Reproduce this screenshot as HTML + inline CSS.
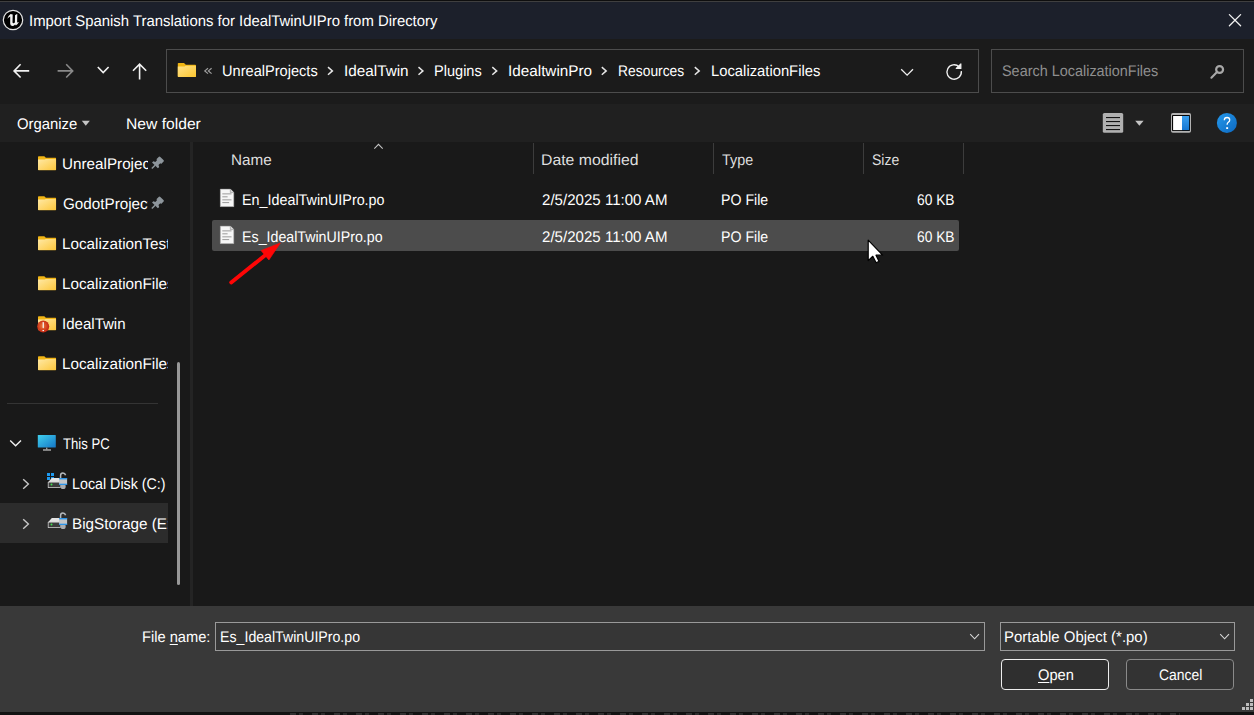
<!DOCTYPE html>
<html><head><meta charset="utf-8">
<style>
html,body{margin:0;padding:0;}
body{width:1254px;height:715px;position:relative;overflow:hidden;background:#0e0e0e;font-family:"Liberation Sans", sans-serif;}
.a{position:absolute;}
.t{position:absolute;white-space:nowrap;font-family:"Liberation Sans", sans-serif;text-rendering:geometricPrecision;}
.t u{text-decoration:underline;text-underline-offset:2px;text-decoration-thickness:1px;}
svg{position:absolute;overflow:visible;}
</style></head><body>
<!-- window frame -->
<div class="a" style="left:0;top:1px;width:1254px;height:1px;background:#3f3f3f"></div>
<!-- title bar -->
<div class="a" style="left:0;top:2px;width:1254px;height:37px;background:#1c202b"></div>
<!-- nav bar -->
<div class="a" style="left:0;top:39px;width:1254px;height:65px;background:#1b1b1b"></div>
<!-- command bar -->
<div class="a" style="left:0;top:104px;width:1254px;height:38px;background:#202020"></div>
<!-- main -->
<div class="a" style="left:0;top:142px;width:1254px;height:464px;background:#191919"></div>
<!-- bottom panel -->
<div class="a" style="left:0;top:606px;width:1254px;height:106px;background:#393939"></div>

<!-- UE logo -->
<svg style="left:0;top:0" width="30" height="40" viewBox="0 0 30 40">
  <circle cx="13" cy="20" r="9.7" fill="#000" stroke="#e4e4e4" stroke-width="1.2"/>
  <path d="M7.3 18.7 Q8.2 15.6 10.6 14.1 L12.7 14.6 L12.5 22.2 Q12.7 23.4 13.7 23.2 L14.9 22.6 L15 15.3 L17 14 L17.3 14.3 L17.1 22.4 L18.9 22.1 Q17.8 24.4 15.9 25.6 L15.1 24.5 Q13.8 26.2 12.1 26.1 Q10.3 25.7 10.2 23.8 L10.2 16.4 Q8.6 17 7.3 18.7 Z" fill="#f2f2f2"/>
</svg>
<!-- close X -->
<svg style="left:0;top:0" width="1254" height="40" viewBox="0 0 1254 40">
  <path d="M1229.4 14.6 L1240.6 25.8 M1240.6 14.6 L1229.4 25.8" stroke="#f2f2f2" stroke-width="1.3" stroke-linecap="round"/>
</svg>

<!-- nav buttons -->
<svg style="left:13px;top:63px" width="17" height="16" viewBox="0 0 17 16">
  <path d="M16.2 7.9 H1.2 M7.6 1.3 L1.1 7.9 L7.6 14.5" stroke="#f2f2f2" stroke-width="1.6" fill="none"/>
</svg>
<svg style="left:57px;top:63px" width="17" height="16" viewBox="0 0 17 16">
  <path d="M0.6 7.9 H15.6 M9.2 1.3 L15.7 7.9 L9.2 14.5" stroke="#8a8a8a" stroke-width="1.6" fill="none"/>
</svg>
<svg style="left:97px;top:66px" width="13" height="8" viewBox="0 0 13 8">
  <path d="M0.8 1 L6.2 6.6 L11.6 1" stroke="#f2f2f2" stroke-width="1.6" fill="none"/>
</svg>
<svg style="left:132px;top:63px" width="16" height="17" viewBox="0 0 16 17">
  <path d="M7.6 16.5 V1.3 M1 7.8 L7.6 1.2 L14.2 7.8" stroke="#f2f2f2" stroke-width="1.6" fill="none"/>
</svg>

<!-- search box -->
<div class="a" style="left:991px;top:49px;width:251px;height:42px;border:1px solid #4c4c4c;background:#1b1b1b"></div>
<!-- address box -->
<div class="a" style="left:166px;top:49px;width:811px;height:42px;border:1px solid #4c4c4c;background:#1b1b1b"></div>
<!-- folder in address -->
<svg style="left:177px;top:62px" width="20" height="16" viewBox="0 0 20 16">
  <defs><linearGradient id="fg" x1="0" y1="0" x2="1" y2="1"><stop offset="0" stop-color="#ffe28a"/><stop offset="1" stop-color="#fbc52e"/></linearGradient></defs>
  <path d="M0.8 1.5 Q0.8 0.9 1.5 0.9 H7 L8.8 2.8 H18.2 Q19 2.8 19 3.6 V14.2 Q19 15 18.2 15 H1.6 Q0.8 15 0.8 14.2 Z" fill="#f0b512"/>
  <path d="M0.8 4.6 H7.5 L8.8 3.8 H18.2 Q19 3.8 19 4.6 V14.2 Q19 15 18.2 15 H1.6 Q0.8 15 0.8 14.2 Z" fill="url(#fg)"/>
</svg>
<svg style="left:0;top:0" width="220" height="90" viewBox="0 0 220 90"><path d="M208 68.2 L204.8 70.9 L208 73.6 M211.6 68.2 L208.4 70.9 L211.6 73.6" stroke="#a0a0a0" stroke-width="1.2" fill="none"/></svg>
<!-- breadcrumb chevrons -->
<svg style="left:0;top:0" width="1254" height="100" viewBox="0 0 1254 100">
  <g stroke="#e6e6e6" stroke-width="1.5" fill="none">
    <path d="M328 67.1 L332.4 70.9 L328 74.7"/>
    <path d="M492.3 67.1 L496.7 70.9 L492.3 74.7"/>
    <path d="M601.8 67.1 L606.2 70.9 L601.8 74.7"/>
    <path d="M694.8 67.1 L699.2 70.9 L694.8 74.7"/>
  </g>
  <g stroke="#e6e6e6" stroke-width="1.5" fill="none">
    <path d="M432 67.1 L436.4 70.9 L432 74.7" transform="translate(-13.5 0)" opacity="1"/>
  </g>
  <!-- dropdown chevron -->
  <path d="M901.2 69.2 L907.1 75.1 L913 69.2" stroke="#f0f0f0" stroke-width="1.3" fill="none"/>
  <!-- refresh -->
  <path d="M961.3 71.2 A7.2 7.2 0 1 1 959.2 66.9" stroke="#f0f0f0" stroke-width="1.4" fill="none"/>
  <path d="M956.2 68.4 H960.9 V63.8 Z" stroke="#f0f0f0" stroke-width="1.1" fill="#f0f0f0" stroke-linejoin="round"/>
</svg>

<svg style="left:0;top:0" width="1254" height="100" viewBox="0 0 1254 100">
  <circle cx="1219.6" cy="69.5" r="3.45" stroke="#a8a8a8" stroke-width="2.2" fill="none"/>
  <path d="M1217 72.1 L1211.4 77.7" stroke="#a8a8a8" stroke-width="2.1" stroke-linecap="round"/>
</svg>
<!-- command bar icons -->
<svg style="left:0;top:0" width="1254" height="145" viewBox="0 0 1254 145">
  <path d="M81.8 120.8 H89.8 L85.8 125.8 Z" fill="#c4c4c4"/>
  <rect x="1102.8" y="113" width="20.4" height="19.8" rx="1.6" fill="#b0b0b0"/>
  <g fill="#141414">
    <rect x="1106" y="117" width="14" height="1.1"/><rect x="1106" y="121" width="14" height="1.1"/><rect x="1106" y="125" width="14" height="1.1"/><rect x="1106" y="129" width="14" height="1.1"/>
  </g>
  <path d="M1135.2 120.8 H1143.6 L1139.4 125.8 Z" fill="#c4c4c4"/>
  <rect x="1171" y="113" width="20" height="19.8" rx="1.8" fill="#b2b2b2"/>
  <rect x="1172" y="115" width="18" height="16" rx="0.8" fill="#050505"/>
  <rect x="1173.1" y="116" width="8.9" height="14.1" fill="#ffffff"/>
  <defs><linearGradient id="bl" x1="0" y1="0" x2="0" y2="1"><stop offset="0" stop-color="#3aa0f0"/><stop offset="1" stop-color="#1677d2"/></linearGradient>
  <linearGradient id="hl" x1="0" y1="0" x2="1" y2="1"><stop offset="0" stop-color="#2499ec"/><stop offset="1" stop-color="#0d68c0"/></linearGradient></defs>
  <rect x="1182" y="116" width="7.2" height="14.1" fill="url(#bl)"/>
  <circle cx="1226.9" cy="122.9" r="10" fill="url(#hl)"/>
  <path d="M1224.3 120.2 Q1224.3 117.5 1227.1 117.5 Q1229.7 117.5 1229.7 119.9 Q1229.7 121.4 1228.3 122.3 Q1227.1 123.1 1227.1 124.8" stroke="#fff" stroke-width="1.3" fill="none"/>
  <rect x="1226.2" y="127.2" width="1.9" height="1.8" fill="#fff"/>
</svg>

<!-- nav pane -->
<div class="a" style="left:190px;top:142px;width:3px;height:464px;background:#242424"></div>
<div class="a" style="left:177px;top:362px;width:3px;height:223px;background:#989898;border-radius:1.5px"></div>
<div class="a" style="left:7px;top:403px;width:151px;height:1px;background:#343434"></div>
<div class="a" style="left:0;top:503px;width:168px;height:40px;background:#2c2c2c"></div>
<svg style="left:0;top:0" width="200" height="600" viewBox="0 0 200 600">
  <defs>
    <linearGradient id="fb" x1="0" y1="0" x2="1" y2="1"><stop offset="0" stop-color="#ffe9a6"/><stop offset="1" stop-color="#fcc63a"/></linearGradient>
    <symbol id="folder" viewBox="0 0 19 15">
      <path d="M0 1.2 Q0 0.3 0.8 0.3 H6.6 L8.2 2 H18.2 Q19 2 19 2.8 V14.1 Q19 14.9 18.2 14.9 H0.8 Q0 14.9 0 14.1 Z" fill="#f1b515"/>
      <path d="M0 3.8 H6.8 L8.2 3.1 H18.2 Q19 3.1 19 3.9 V14.1 Q19 14.9 18.2 14.9 H0.8 Q0 14.9 0 14.1 Z" fill="url(#fb)"/>
    </symbol>
    
    <symbol id="disk" viewBox="0 0 21 18">
      <path d="M1.3 10 L4.8 6 H13.4 V10 Z" fill="#e4e4e4"/>
      <rect x="0.8" y="9.8" width="12.8" height="6.2" rx="0.6" fill="#c9c9c9"/>
      <rect x="1.6" y="10.6" width="11.4" height="4.6" fill="#3c3c3c"/>
      <circle cx="4.5" cy="12.4" r="1" fill="#3ee04e"/>
      <path d="M13.6 6.2 V3.6 Q13.6 1.1 15.9 1.1 Q18 1.1 18.6 3.2" stroke="#b4b8bc" stroke-width="1.5" fill="none"/>
      <circle cx="16.1" cy="14.4" r="2.6" fill="#a9adb1"/>
      <rect x="12.1" y="6" width="8" height="7" fill="#c4c6c8"/>
      <rect x="12.1" y="6" width="8" height="1.4" fill="#2b95ea"/>
      <rect x="12.1" y="11.7" width="8" height="1.3" fill="#2b95ea"/>
    </symbol>
  </defs>
  <use href="#folder" x="38" y="155.8" width="18.2" height="14.6"/>
  <use href="#folder" x="38" y="195.8" width="18.2" height="14.6"/>
  <use href="#folder" x="38" y="235.8" width="18.2" height="14.6"/>
  <use href="#folder" x="38" y="275.8" width="18.2" height="14.6"/>
  <use href="#folder" x="38" y="315.8" width="18.2" height="14.6"/>
  <use href="#folder" x="38" y="355.8" width="18.2" height="14.6"/>
  <g transform="translate(151.8 168.6) rotate(-45) scale(0.86)" fill="#8d959b"><rect x="0" y="-0.85" width="5.5" height="1.7"/><path d="M5.2 -4.8 L7.4 -4.8 L8.4 -2.6 L11.4 -2.6 L11.4 -3.6 Q11.4 -3.9 11.8 -3.9 L15.6 -3.9 Q16.6 -3.9 16.6 -2.6 L16.6 2.6 Q16.6 3.9 15.6 3.9 L11.8 3.9 Q11.4 3.9 11.4 3.6 L11.4 2.6 L8.4 2.6 L7.4 4.8 L5.2 4.8 Z"/></g>
  <g transform="translate(151.8 208.6) rotate(-45) scale(0.86)" fill="#8d959b"><rect x="0" y="-0.85" width="5.5" height="1.7"/><path d="M5.2 -4.8 L7.4 -4.8 L8.4 -2.6 L11.4 -2.6 L11.4 -3.6 Q11.4 -3.9 11.8 -3.9 L15.6 -3.9 Q16.6 -3.9 16.6 -2.6 L16.6 2.6 Q16.6 3.9 15.6 3.9 L11.8 3.9 Q11.4 3.9 11.4 3.6 L11.4 2.6 L8.4 2.6 L7.4 4.8 L5.2 4.8 Z"/></g>
  <!-- error badge -->
  <defs><radialGradient id="eb" cx="0.45" cy="0.45" r="0.6"><stop offset="0" stop-color="#ec7a36"/><stop offset="1" stop-color="#c01c10"/></radialGradient></defs>
  <circle cx="43.2" cy="326.6" r="6" fill="url(#eb)"/>
  <rect x="42.6" y="322" width="1.3" height="6.2" rx="0.6" fill="#f4f4f4"/>
  <rect x="42.5" y="330" width="1.5" height="1.1" fill="#f4f4f4"/>
  <!-- This PC -->
  <path d="M10.2 440.4 L15.6 445.8 L21 440.4" stroke="#f0f0f0" stroke-width="1.4" fill="none"/>
  <defs><linearGradient id="pc" x1="0" y1="0" x2="1" y2="1"><stop offset="0" stop-color="#40d0ee"/><stop offset="1" stop-color="#1476c6"/></linearGradient></defs>
  <rect x="37.8" y="435" width="18" height="12.6" rx="0.6" fill="url(#pc)"/>
  <rect x="46" y="447.6" width="1.4" height="1.8" fill="#9a9a9a"/>
  <rect x="43" y="449.4" width="8" height="1.2" fill="#c8c8c8"/>
  <!-- Local disk -->
  <path d="M23.2 479.2 L28.4 484 L23.2 488.8" stroke="#c8c8c8" stroke-width="1.4" fill="none"/>
  <g fill="#1e9af0"><rect x="47" y="473" width="3" height="3"/><rect x="51" y="473" width="3" height="3"/><rect x="47" y="477" width="3" height="3"/><rect x="51" y="477" width="3" height="3"/></g>
  <use href="#disk" x="47" y="472" width="21" height="18"/>
  <!-- BigStorage -->
  <path d="M23.2 519.2 L28.4 524 L23.2 528.8" stroke="#c8c8c8" stroke-width="1.4" fill="none"/>
  <use href="#disk" x="47" y="512" width="21" height="18"/>
</svg>

<!-- column header separators -->
<div class="a" style="left:533px;top:143px;width:1px;height:31px;background:#3c3c3c"></div>
<div class="a" style="left:713px;top:143px;width:1px;height:31px;background:#3c3c3c"></div>
<div class="a" style="left:863px;top:143px;width:1px;height:31px;background:#3c3c3c"></div>
<div class="a" style="left:963px;top:143px;width:1px;height:31px;background:#3c3c3c"></div>
<svg style="left:373px;top:143px" width="11" height="7" viewBox="0 0 11 7">
  <path d="M1.3 5.6 L5.5 1.3 L9.7 5.6" stroke="#c4c4c4" stroke-width="1.05" fill="none"/>
</svg>
<!-- selected row -->
<div class="a" style="left:212px;top:220px;width:747px;height:31px;background:#4c4c4c;border-radius:2px"></div>
<!-- file icons -->
<svg style="left:0;top:0" width="1254" height="300" viewBox="0 0 1254 300">
  <defs>
    <symbol id="file" viewBox="0 0 15 19">
      <path d="M0.5 0.5 H10.8 L14.4 4.1 V18.5 H0.5 Z" fill="#f6f6f6" stroke="#a0a0a0" stroke-width="0.8"/>
      <path d="M10.8 0.5 V4.1 H14.4" fill="#d8d8d8" stroke="#a0a0a0" stroke-width="0.8"/>
      <g stroke="#8e8e8e" stroke-width="0.9"><path d="M2.6 5.4 H12"/><path d="M2.6 8.4 H8"/><path d="M2.6 11.5 H12"/><path d="M2.6 14.3 H9.6"/></g>
    </symbol>
  </defs>
  <use href="#file" x="219.6" y="188.6" width="15" height="18.6"/>
  <use href="#file" x="219.6" y="225.6" width="15" height="18.6"/>
  <!-- red arrow -->
  <path d="M231.2 282.4 L265.5 255" stroke="#fe0606" stroke-width="3.9" stroke-linecap="round"/>
  <path d="M280.4 242.9 L261 250.6 L268.9 260 Z" fill="#fe0606" stroke="#fe0606" stroke-width="0.6" stroke-linejoin="round"/>
</svg>
<!-- cursor -->
<svg style="left:867px;top:239px" width="18" height="26" viewBox="0 0 18 26">
  <path d="M1.2 1.2 V21.6 L5.8 17.3 L9.1 23.8 L12.1 22.4 L9 16.2 L15.6 16.2 Z" fill="#fff" stroke="#000" stroke-width="1.2" stroke-linejoin="round"/>
</svg>

<!-- bottom inputs -->
<div class="a" style="left:215px;top:622px;width:768px;height:27px;border:1px solid #999999;background:#363636"></div>
<div class="a" style="left:1000px;top:622px;width:233px;height:27px;border:1px solid #999999;background:#363636"></div>
<div class="a" style="left:1001px;top:659px;width:106px;height:29px;border:1px solid #eeeeee;border-radius:4px;background:#2f2f2f"></div>
<div class="a" style="left:1126px;top:659px;width:106px;height:29px;border:1px solid #8a8a8a;border-radius:4px;background:#333333"></div>
<svg style="left:0;top:600px" width="1254" height="115" viewBox="0 600 1254 115">
  <path d="M970.2 634.2 L974.6 638.8 L979 634.2" stroke="#d8d8d8" stroke-width="1.1" fill="none"/>
  <path d="M1220.2 634.2 L1224.6 638.8 L1229 634.2" stroke="#d8d8d8" stroke-width="1.1" fill="none"/>
  <g fill="#bdbdbd">
    <rect x="1250" y="699" width="3" height="3"/>
    <rect x="1246" y="703" width="3" height="3"/><rect x="1250" y="703" width="3" height="3"/>
    <rect x="1242" y="707" width="3" height="3"/><rect x="1246" y="707" width="3" height="3"/><rect x="1250" y="707" width="3" height="3"/>
  </g>
</svg>

<div class="a" style="left:0;top:712px;width:1254px;height:3px;overflow:hidden;background:#121212">
  <div class="a" style="left:290px;top:1px;width:890px;height:3px;background:repeating-linear-gradient(90deg,#6a6a6a 0 6px,transparent 6px 9px,#5a5a5a 9px 13px,transparent 13px 22px);opacity:0.35"></div>
</div>
<div class="t" style="left:28.60px;top:12px;font-size:15.4px;line-height:20px;color:#ffffff;transform:scaleX(0.9665);transform-origin:1.00px 0;">Import Spanish Translations for IdealTwinUIPro from Directory</div>
<div class="t" style="left:221.80px;top:62px;font-size:15.4px;line-height:20px;color:#ffffff;transform:scaleX(0.9477);transform-origin:1.00px 0;">UnrealProjects</div>
<div class="t" style="left:343.60px;top:62px;font-size:15.4px;line-height:20px;color:#ffffff;transform:scaleX(0.9928);transform-origin:1.00px 0;">IdealTwin</div>
<div class="t" style="left:433.60px;top:62px;font-size:15.4px;line-height:20px;color:#ffffff;transform:scaleX(0.9441);transform-origin:1.00px 0;">Plugins</div>
<div class="t" style="left:507.60px;top:62px;font-size:15.4px;line-height:20px;color:#ffffff;transform:scaleX(0.9924);transform-origin:1.00px 0;">IdealtwinPro</div>
<div class="t" style="left:617.60px;top:62px;font-size:15.4px;line-height:20px;color:#ffffff;transform:scaleX(0.8989);transform-origin:1.00px 0;">Resources</div>
<div class="t" style="left:710.60px;top:62px;font-size:15.4px;line-height:20px;color:#ffffff;transform:scaleX(0.9604);transform-origin:1.00px 0;">LocalizationFiles</div>
<div class="t" style="left:1001.60px;top:62px;font-size:15.4px;line-height:20px;color:#8f8f8f;transform:scaleX(0.9370);transform-origin:0.00px 0;">Search LocalizationFiles</div>
<div class="t" style="left:16.70px;top:115px;font-size:15.4px;line-height:20px;color:#ffffff;transform:scaleX(0.9646);transform-origin:0.00px 0;">Organize</div>
<div class="t" style="left:125.90px;top:115px;font-size:15.4px;line-height:20px;color:#ffffff;transform:scaleX(1.0174);transform-origin:1.00px 0;">New folder</div>
<div class="a" style="left:62.00px;top:155px;width:86.00px;height:24px;overflow:hidden"><div class="t" style="left:0;top:0;font-size:15.4px;line-height:20px;color:#ffffff;transform:scaleX(0.9900);transform-origin:1.00px 0;">UnrealProject</div></div>
<div class="a" style="left:63.00px;top:195px;width:85.00px;height:24px;overflow:hidden"><div class="t" style="left:0;top:0;font-size:15.4px;line-height:20px;color:#ffffff;transform:scaleX(0.9900);transform-origin:0.00px 0;">GodotProject</div></div>
<div class="a" style="left:62.00px;top:235px;width:106.00px;height:24px;overflow:hidden"><div class="t" style="left:0;top:0;font-size:15.4px;line-height:20px;color:#ffffff;transform:scaleX(0.9900);transform-origin:1.00px 0;">LocalizationTest</div></div>
<div class="a" style="left:62.00px;top:275px;width:106.00px;height:24px;overflow:hidden"><div class="t" style="left:0;top:0;font-size:15.4px;line-height:20px;color:#ffffff;transform:scaleX(0.9900);transform-origin:1.00px 0;">LocalizationFiles</div></div>
<div class="t" style="left:62.00px;top:315px;font-size:15.4px;line-height:20px;color:#ffffff;transform:scaleX(0.9770);transform-origin:1.00px 0;">IdealTwin</div>
<div class="a" style="left:62.00px;top:355px;width:106.00px;height:24px;overflow:hidden"><div class="t" style="left:0;top:0;font-size:15.4px;line-height:20px;color:#ffffff;transform:scaleX(0.9900);transform-origin:1.00px 0;">LocalizationFiles</div></div>
<div class="t" style="left:63.00px;top:435px;font-size:15.4px;line-height:20px;color:#ffffff;transform:scaleX(0.8532);transform-origin:0.00px 0;">This PC</div>
<div class="a" style="left:71.60px;top:475px;width:96.40px;height:24px;overflow:hidden"><div class="t" style="left:0;top:0;font-size:15.4px;line-height:20px;color:#ffffff;transform:scaleX(0.9260);transform-origin:1.00px 0;">Local Disk (C:)</div></div>
<div class="a" style="left:71.60px;top:515px;width:96.40px;height:24px;overflow:hidden"><div class="t" style="left:0;top:0;font-size:15.4px;line-height:20px;color:#ffffff;transform:scaleX(0.9900);transform-origin:1.00px 0;">BigStorage (E:)</div></div>
<div class="t" style="left:231.10px;top:151px;font-size:15.4px;line-height:20px;color:#dedede;transform:scaleX(0.9925);transform-origin:1.00px 0;">Name</div>
<div class="t" style="left:541.00px;top:151px;font-size:15.4px;line-height:20px;color:#dedede;transform:scaleX(1.0278);transform-origin:1.00px 0;">Date modified</div>
<div class="t" style="left:721.60px;top:151px;font-size:15.4px;line-height:20px;color:#dedede;transform:scaleX(0.9327);transform-origin:0.00px 0;">Type</div>
<div class="t" style="left:871.60px;top:151px;font-size:15.4px;line-height:20px;color:#dedede;transform:scaleX(0.9122);transform-origin:0.00px 0;">Size</div>
<div class="t" style="left:242.20px;top:191px;font-size:15.4px;line-height:20px;color:#ffffff;transform:scaleX(0.9302);transform-origin:1.00px 0;">En_IdealTwinUIPro.po</div>
<div class="t" style="left:541.80px;top:191px;font-size:15.4px;line-height:20px;color:#ffffff;transform:scaleX(0.9797);transform-origin:0.00px 0;">2/5/2025 11:00 AM</div>
<div class="t" style="left:720.60px;top:191px;font-size:15.4px;line-height:20px;color:#ffffff;transform:scaleX(0.9185);transform-origin:1.00px 0;">PO File</div>
<div class="t" style="left:916.80px;top:191px;font-size:15.4px;line-height:20px;color:#ffffff;transform:scaleX(0.8953);transform-origin:0.00px 0;">60 KB</div>
<div class="t" style="left:242.20px;top:228px;font-size:15.4px;line-height:20px;color:#ffffff;transform:scaleX(0.9223);transform-origin:1.00px 0;">Es_IdealTwinUIPro.po</div>
<div class="t" style="left:541.80px;top:228px;font-size:15.4px;line-height:20px;color:#ffffff;transform:scaleX(0.9797);transform-origin:0.00px 0;">2/5/2025 11:00 AM</div>
<div class="t" style="left:720.60px;top:228px;font-size:15.4px;line-height:20px;color:#ffffff;transform:scaleX(0.9185);transform-origin:1.00px 0;">PO File</div>
<div class="t" style="left:916.80px;top:228px;font-size:15.4px;line-height:20px;color:#ffffff;transform:scaleX(0.8953);transform-origin:0.00px 0;">60 KB</div>
<div class="t" style="left:142.20px;top:628px;font-size:15.4px;line-height:20px;color:#ffffff;transform:scaleX(0.9515);transform-origin:1.00px 0;">File <u>n</u>ame:</div>
<div class="t" style="left:219.60px;top:628px;font-size:15.4px;line-height:20px;color:#ffffff;transform:scaleX(0.9189);transform-origin:1.00px 0;">Es_IdealTwinUIPro.po</div>
<div class="t" style="left:1004.10px;top:628px;font-size:15.4px;line-height:20px;color:#ffffff;transform:scaleX(0.9703);transform-origin:1.00px 0;">Portable Object (*.po)</div>
<div class="t" style="left:1037.90px;top:666px;font-size:15.4px;line-height:20px;color:#ffffff;transform:scaleX(0.9517);transform-origin:0.00px 0;"><u>O</u>pen</div>
<div class="t" style="left:1158.60px;top:666px;font-size:15.4px;line-height:20px;color:#ffffff;transform:scaleX(0.9055);transform-origin:0.00px 0;">Cancel</div>
</body></html>
